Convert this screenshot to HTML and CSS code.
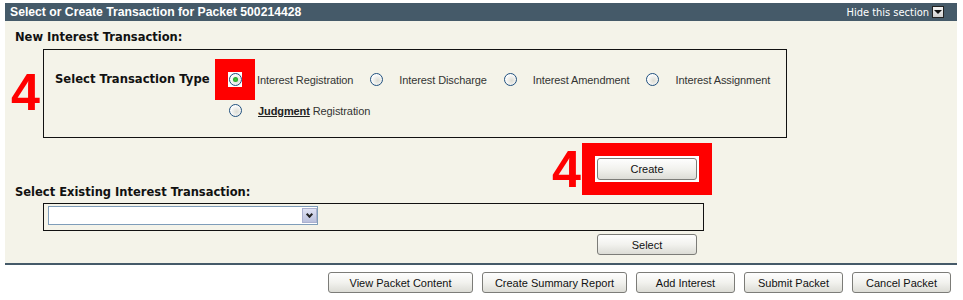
FILE: index.html
```html
<!DOCTYPE html>
<html>
<head>
<meta charset="utf-8">
<title>Select or Create Transaction</title>
<link rel="stylesheet" href="styles.css">
</head>
<body>
<div class="section">
  <div class="section-head">
    <span class="section-title">Select or Create Transaction for Packet 500214428</span>
    <a class="hide-link" href="#">Hide this section <span class="hide-icon"></span></a>
  </div>
  <div class="section-body">
    <h3 class="group-label">New Interest Transaction:</h3>
    <div class="type-box">
      <span class="callout callout-type">4</span>
      <div class="type-label">Select Transaction Type</div>
      <div class="type-options">
        <div class="opt-row">
          <label class="opt"><span class="mark"><span class="radio checked"></span></span>Interest Registration</label>
          <label class="opt"><span class="radio"></span>Interest Discharge</label>
          <label class="opt"><span class="radio"></span>Interest Amendment</label>
          <label class="opt"><span class="radio"></span>Interest Assignment</label>
        </div>
        <div class="opt-row">
          <label class="opt"><span class="radio"></span><a class="term" href="#">Judgment</a>&nbsp;Registration</label>
        </div>
      </div>
    </div>
    <div class="create-row">
      <span class="callout callout-create">4</span>
      <span class="mark-btn"><button class="btn btn-wide">Create</button></span>
    </div>
    <h3 class="group-label existing-label">Select Existing Interest Transaction:</h3>
    <div class="existing-box">
      <div class="dropdown"><span class="dropdown-arrow"></span></div>
    </div>
    <div class="select-row">
      <button class="btn btn-wide">Select</button>
    </div>
  </div>
</div>
<div class="actions">
  <button class="btn btn-long">View Packet Content</button>
  <button class="btn btn-long">Create Summary Report</button>
  <button class="btn btn-short">Add Interest</button>
  <button class="btn btn-short">Submit Packet</button>
  <button class="btn btn-short">Cancel Packet</button>
</div>
</body>
</html>
```

FILE: styles.css
```css
body {
    margin: 0;
    background: #fff;
    font-family: "Liberation Sans", Arial, sans-serif;
    font-size: 11px;
    color: #222;
}
.section {
    margin: 3px 6px 0 5px;
    background: #f4f3e9;
    border-bottom: 2px solid #455a69;
}
.section-head {
    display: flex;
    justify-content: space-between;
    align-items: center;
    height: 18px;
    padding: 0 13px 0 5px;
    background: #455a69;
    color: #fff;
}
.section-title {
    font-weight: bold;
    font-size: 12.2px;
}
.hide-link {
    display: flex;
    align-items: center;
    color: #fff;
    text-decoration: none;
    font-family: "DejaVu Sans Condensed", "DejaVu Sans", sans-serif;
    font-size: 11px;
}
.hide-icon {
    position: relative;
    width: 10px;
    height: 10px;
    margin-left: 3px;
    background: linear-gradient(#f4f4f4, #cfcfcf);
    border: 1px solid #222;
}
.hide-icon:after {
    content: "";
    position: absolute;
    left: 1px;
    top: 3px;
    border-left: 4px solid transparent;
    border-right: 4px solid transparent;
    border-top: 4px solid #111;
}
.section-body {
    position: relative;
    padding: 10px 0 8px 0;
}
.group-label {
    margin: 0 0 0 10px;
    font-family: "DejaVu Sans", Verdana, sans-serif;
    font-size: 11.5px;
    font-weight: bold;
    line-height: 13px;
    color: #111;
    white-space: nowrap;
}
.type-box {
    position: relative;
    display: flex;
    width: 742px;
    height: 87px;
    margin: 5px 0 0 38px;
    padding: 0;
    border: 1px solid #111;
    box-sizing: content-box;
}
.type-label {
    flex: none;
    width: 174px;
    padding: 22px 0 0 11px;
    font-family: "DejaVu Sans", Verdana, sans-serif;
    font-weight: bold;
    font-size: 11.6px;
    color: #111;
    white-space: nowrap;
}
.type-options {
    padding-top: 21px;
}
.opt-row {
    display: flex;
    height: 16px;
    margin-bottom: 15px;
    white-space: nowrap;
}
.opt {
    display: flex;
    align-items: center;
    margin-right: 17px;
    padding-top: 1px;
    color: #333;
    letter-spacing: -0.1px;
}
.radio {
    position: relative;
    display: inline-block;
    flex: none;
    width: 11px;
    height: 11px;
    margin-right: 16px;
    margin-top: -1px;
    border: 1px solid #1f4f7e;
    border-radius: 50%;
    background: radial-gradient(circle at 60% 60%, #dcdcd4, #fff 70%);
}
.radio.checked:after {
    content: "";
    position: absolute;
    left: 3px;
    top: 3px;
    width: 5px;
    height: 5px;
    border-radius: 50%;
    background: radial-gradient(#3fcf3f, #1e8f1e);
}
.mark {
    display: inline-flex;
    flex: none;
    justify-content: center;
    align-items: center;
    width: 14px;
    height: 15px;
    margin: -1px 15px 0 -1px;
    background: #fff;
    box-shadow: 0 0 0 13px #f00;
}
.mark .radio {
    margin: 0;
}
.term {
    color: #222;
    font-weight: bold;
}
.callout {
    position: absolute;
    color: #f00;
    font-family: "Liberation Sans", Arial, sans-serif;
    font-weight: bold;
    font-size: 52px;
    line-height: 52px;
}
.callout-type {
    left: -33px;
    top: 16px;
}
.callout-create {
    left: -43px;
    top: -13px;
}
.create-row {
    position: relative;
    margin: 18px 0 0 590px;
    width: 104px;
}
.mark-btn {
    display: block;
    padding: 2px;
    background: #fff;
    box-shadow: 0 0 0 13px #f00;
}
.existing-label {
    margin-top: 4px;
}
.existing-box {
    width: 659px;
    height: 26px;
    margin: 4px 0 0 38px;
    border: 1px solid #111;
}
.dropdown {
    position: relative;
    width: 268px;
    height: 17px;
    margin: 2px 0 0 4px;
    background: #fff;
    border: 1px solid #7f9db9;
}
.dropdown-arrow {
    position: absolute;
    right: 0;
    top: 1px;
    width: 15px;
    height: 15px;
    background: linear-gradient(#dfe2f3, #b9bfdc);
    border: 1px solid #aab0cf;
    box-sizing: border-box;
}
.dropdown-arrow:after {
    content: "";
    position: absolute;
    left: 4px;
    top: 3px;
    width: 3px;
    height: 3px;
    border-right: 2px solid #222;
    border-bottom: 2px solid #222;
    transform: rotate(45deg);
}
.select-row {
    margin: 3px 0 0 592px;
}
.btn {
    height: 21px;
    padding: 0;
    border: 1px solid #7c7c78;
    border-radius: 3px;
    background: linear-gradient(#fefefe, #f2f2ee 50%, #dcdcd6);
    font-family: "Liberation Sans", Arial, sans-serif;
    font-size: 11px;
    color: #111;
}
.btn-wide {
    width: 100px;
    display: block;
}
.mark-btn .btn {
    height: 22px;
}
.actions {
    display: flex;
    justify-content: flex-end;
    gap: 9px;
    padding: 7px 12px 0 0;
}
.btn-long {
    width: 145px;
}
.btn-short {
    width: 99px;
}
```
